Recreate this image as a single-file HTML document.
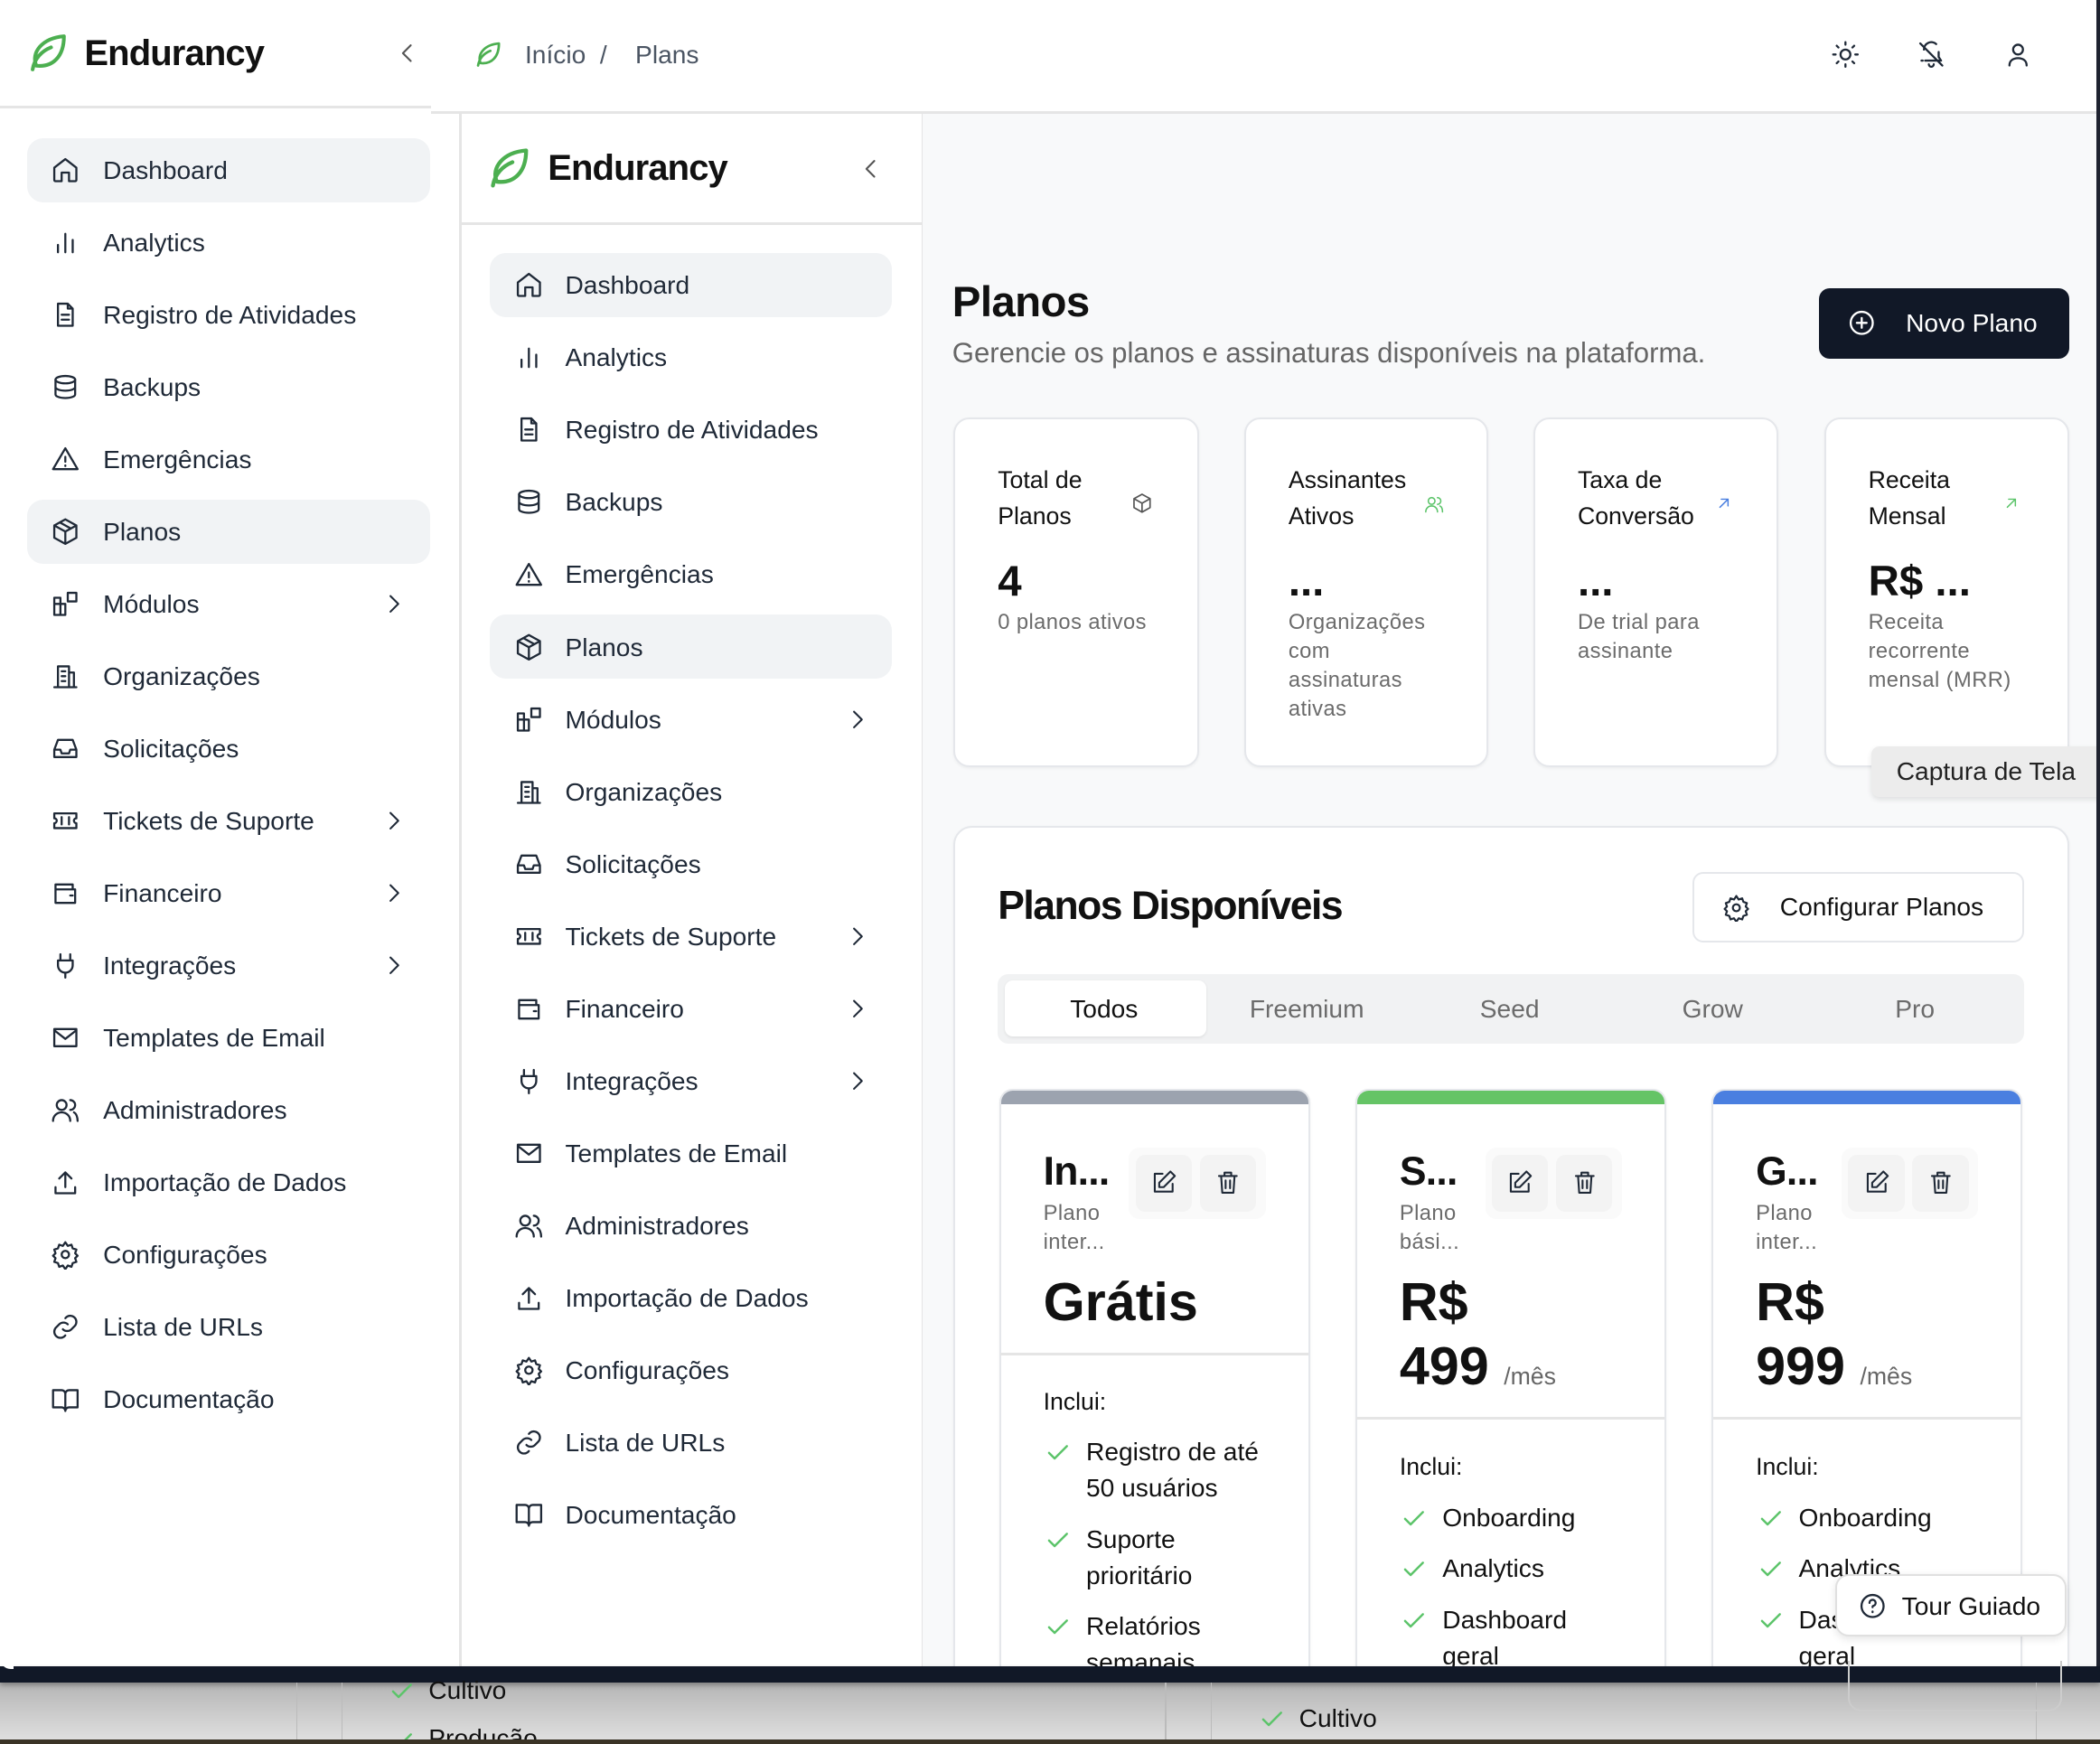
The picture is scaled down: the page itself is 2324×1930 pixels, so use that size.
<!DOCTYPE html>
<html><head><meta charset="utf-8">
<style>
*{margin:0;padding:0;box-sizing:border-box}
html,body{width:2324px;height:1930px;overflow:hidden;background:#fff}
#w{position:relative;width:1568px;height:1302px;zoom:1.48214;font-family:"Liberation Sans",sans-serif;color:#1f2937;overflow:hidden;background:#fff}
.a{position:absolute}
.t{position:absolute;white-space:nowrap;line-height:1}
svg.i{position:absolute;width:22px;height:22px;fill:none;stroke:#1f2937;stroke-width:1.7;stroke-linecap:round;stroke-linejoin:round}
.nv{font-size:19px;color:#1f2937}
.hl{position:absolute;background:#f1f3f5;border-radius:12px}
.card{position:absolute;background:#fff;border:1.5px solid #e5e7eb;border-radius:12px;box-shadow:0 1px 2px rgba(0,0,0,.05)}
.st{font-size:18px;color:#111;line-height:27px;position:absolute;white-space:nowrap}
.sd{font-size:16px;color:#6b6b6b;line-height:21.7px;position:absolute;white-space:nowrap;letter-spacing:.3px}
.sv{font-size:32px;font-weight:bold;color:#111;position:absolute;line-height:1}
.chk{position:absolute;width:20px;height:20px;fill:none;stroke:#5cc46a;stroke-width:2;stroke-linecap:round;stroke-linejoin:round}
.ft{position:absolute;font-size:19px;color:#111;line-height:27px;white-space:nowrap}
.logo{font-size:27px;font-weight:bold;color:#111;letter-spacing:-0.6px}
</style></head><body><div id="w">

<!-- outer sidebar -->
<svg class="i" style="left:20px;top:23px;width:33px;height:33px;stroke:#4caf50;stroke-width:2" viewBox="0 0 24 24"><path d="M3 21c1-6 5-10 10-12M5 19C2 12 8 4 20 3c0 11-6 17-15 16z"/></svg>
<div class="t logo" style="left:63px;top:26px">Endurancy</div>
<svg class="i" style="left:294px;top:30px;width:20px;height:20px;stroke:#555" viewBox="0 0 24 24"><path d="M15 5l-7 7 7 7"/></svg>
<div class="a" style="left:0;top:79px;width:322px;height:2px;background:#e5e5e5"></div>

<div class="hl" style="left:20px;top:103px;width:301px;height:48px"></div>
<div class="hl" style="left:20px;top:373px;width:301px;height:48px"></div>

<div class="a" style="left:38px;top:0">
<svg class="i" style="top:116px" viewBox="0 0 24 24"><path d="M3 10l9-7 9 7v10a1 1 0 0 1-1 1h-5v-7h-6v7H4a1 1 0 0 1-1-1z"/></svg>
<svg class="i" style="top:170px" viewBox="0 0 24 24"><path d="M6 20v-6M12 20V5M18 20v-10"/></svg>
<svg class="i" style="top:224px" viewBox="0 0 24 24"><path d="M14 3H6v18h12V7zM14 3v4h4M9 12h6M9 16h6"/></svg>
<svg class="i" style="top:278px" viewBox="0 0 24 24"><ellipse cx="12" cy="6" rx="8" ry="3"/><path d="M4 6v12c0 1.7 3.6 3 8 3s8-1.3 8-3V6M4 12c0 1.7 3.6 3 8 3s8-1.3 8-3"/></svg>
<svg class="i" style="top:332px" viewBox="0 0 24 24"><path d="M12 3L2 20h20zM12 10v4M12 17v.5"/></svg>
<svg class="i" style="top:386px" viewBox="0 0 24 24"><path d="M12 2l9 5v10l-9 5-9-5V7zM3 7l9 5 9-5M12 12v10M7.5 4.5l9 5"/></svg>
<svg class="i" style="top:440px" viewBox="0 0 24 24"><path d="M3 12h9v9H3zM3 12V7h5v5M8 21v-9M14 3h7v7h-7z"/></svg>
<svg class="i" style="top:494px" viewBox="0 0 24 24"><path d="M6 21V4h9v17M15 9h4v12M3 21h18M9 8h3M9 12h3M9 16h3"/></svg>
<svg class="i" style="top:548px" viewBox="0 0 24 24"><path d="M3 13l3-8h12l3 8v6H3zM3 13h5l1 3h6l1-3h5"/></svg>
<svg class="i" style="top:602px" viewBox="0 0 24 24"><path d="M3 6h18v4a2 2 0 0 0 0 4v4H3v-4a2 2 0 0 0 0-4zM9 9v6M15 9v6"/></svg>
<svg class="i" style="top:656px" viewBox="0 0 24 24"><path d="M4 5h14v4M4 5v15h16V9H4M16 14h2"/></svg>
<svg class="i" style="top:710px" viewBox="0 0 24 24"><path d="M8 3v5M16 3v5M6 8h12v4a6 6 0 0 1-12 0zM12 18v4"/></svg>
<svg class="i" style="top:764px" viewBox="0 0 24 24"><path d="M3 5h18v14H3zM3 6l9 7 9-7"/></svg>
<svg class="i" style="top:818px" viewBox="0 0 24 24"><circle cx="9" cy="8" r="4"/><path d="M2 21c0-4 3-7 7-7s7 3 7 7M16 4a4 4 0 0 1 0 8M19 14c2 1 3 4 3 7"/></svg>
<svg class="i" style="top:872px" viewBox="0 0 24 24"><path d="M12 16V4M7 9l5-5 5 5M4 16v5h16v-5"/></svg>
<svg class="i" style="top:926px" viewBox="0 0 24 24"><circle cx="12" cy="12" r="3"/><path d="M12 2l2 3 3-1 1 3 3 1-1 3 2 2-2 2 1 3-3 1-1 3-3-1-2 3-2-3-3 1-1-3-3-1 1-3-2-2 2-2-1-3 3-1 1-3 3 1z"/></svg>
<svg class="i" style="top:980px" viewBox="0 0 24 24"><path d="M10 14a5 5 0 0 0 7 0l3-3a5 5 0 0 0-7-7l-1 1M14 10a5 5 0 0 0-7 0l-3 3a5 5 0 0 0 7 7l1-1"/></svg>
<svg class="i" style="top:1034px" viewBox="0 0 24 24"><path d="M2 4h7a3 3 0 0 1 3 3v14a3 3 0 0 0-3-3H2zM22 4h-7a3 3 0 0 0-3 3v14a3 3 0 0 1 3-3h7z"/></svg>
</div>
<div class="a nv" style="left:77px;top:0">
<div class="t" style="top:118px">Dashboard</div><div class="t" style="top:172px">Analytics</div><div class="t" style="top:226px">Registro de Atividades</div><div class="t" style="top:280px">Backups</div><div class="t" style="top:334px">Emergências</div><div class="t" style="top:388px">Planos</div><div class="t" style="top:442px">Módulos</div><div class="t" style="top:496px">Organizações</div><div class="t" style="top:550px">Solicitações</div><div class="t" style="top:604px">Tickets de Suporte</div><div class="t" style="top:658px">Financeiro</div><div class="t" style="top:712px">Integrações</div><div class="t" style="top:766px">Templates de Email</div><div class="t" style="top:820px">Administradores</div><div class="t" style="top:874px">Importação de Dados</div><div class="t" style="top:928px">Configurações</div><div class="t" style="top:982px">Lista de URLs</div><div class="t" style="top:1036px">Documentação</div>
</div>
<div class="a" style="left:284px;top:0">
<svg class="i" style="top:440px;width:20px" viewBox="0 0 24 24"><path d="M9 5l7 7-7 7"/></svg>
<svg class="i" style="top:602px;width:20px" viewBox="0 0 24 24"><path d="M9 5l7 7-7 7"/></svg>
<svg class="i" style="top:656px;width:20px" viewBox="0 0 24 24"><path d="M9 5l7 7-7 7"/></svg>
<svg class="i" style="top:710px;width:20px" viewBox="0 0 24 24"><path d="M9 5l7 7-7 7"/></svg>
</div>

<!-- top bar -->
<div class="a" style="left:322px;top:83px;width:1246px;height:2px;background:#e5e5e5"></div>
<svg class="i" style="left:354px;top:30px;stroke:#4caf50;stroke-width:2" viewBox="0 0 24 24"><path d="M3 21c1-6 5-10 10-12M5 19C2 12 8 4 20 3c0 11-6 17-15 16z"/></svg>
<div class="t" style="left:392px;top:32px;font-size:19px;color:#4b5563">Início &nbsp;/ &nbsp;&nbsp;&nbsp;Plans</div>
<svg class="i" style="left:1367px;top:30px" viewBox="0 0 24 24"><circle cx="12" cy="12" r="4"/><path d="M12 2v2M12 20v2M2 12h2M20 12h2M4.9 4.9l1.4 1.4M17.7 17.7l1.4 1.4M4.9 19.1l1.4-1.4M17.7 6.3l1.4-1.4"/></svg>
<svg class="i" style="left:1431px;top:30px" viewBox="0 0 24 24"><path d="M6 8a6 6 0 0 1 10-4.5M18 10v4l2 3H7M4 17h1M10 20a2 2 0 0 0 4 0M3 3l18 18"/></svg>
<svg class="i" style="left:1496px;top:30px" viewBox="0 0 24 24"><circle cx="12" cy="8" r="4"/><path d="M5 21c0-4 3-6 7-6s7 2 7 6"/></svg>

<!-- inner sidebar -->
<div class="a" style="left:343px;top:85px;width:2px;height:1170px;background:#e5e5e5"></div>
<div class="a" style="left:688px;top:85px;width:1px;height:1170px;background:#e5e5e5"></div>
<svg class="i" style="left:364px;top:108px;width:35px;height:35px;stroke:#4caf50;stroke-width:2" viewBox="0 0 24 24"><path d="M3 21c1-6 5-10 10-12M5 19C2 12 8 4 20 3c0 11-6 17-15 16z"/></svg>
<div class="t logo" style="left:409px;top:112px">Endurancy</div>
<svg class="i" style="left:640px;top:116px;width:20px;height:20px;stroke:#555" viewBox="0 0 24 24"><path d="M15 5l-7 7 7 7"/></svg>
<div class="a" style="left:345px;top:166px;width:343px;height:2px;background:#e5e5e5"></div>
<div class="hl" style="left:366px;top:189px;width:300px;height:48px"></div>
<div class="hl" style="left:366px;top:459px;width:300px;height:48px"></div>
<div class="a" style="left:384px;top:86px">
<svg class="i" style="top:116px" viewBox="0 0 24 24"><path d="M3 10l9-7 9 7v10a1 1 0 0 1-1 1h-5v-7h-6v7H4a1 1 0 0 1-1-1z"/></svg>
<svg class="i" style="top:170px" viewBox="0 0 24 24"><path d="M6 20v-6M12 20V5M18 20v-10"/></svg>
<svg class="i" style="top:224px" viewBox="0 0 24 24"><path d="M14 3H6v18h12V7zM14 3v4h4M9 12h6M9 16h6"/></svg>
<svg class="i" style="top:278px" viewBox="0 0 24 24"><ellipse cx="12" cy="6" rx="8" ry="3"/><path d="M4 6v12c0 1.7 3.6 3 8 3s8-1.3 8-3V6M4 12c0 1.7 3.6 3 8 3s8-1.3 8-3"/></svg>
<svg class="i" style="top:332px" viewBox="0 0 24 24"><path d="M12 3L2 20h20zM12 10v4M12 17v.5"/></svg>
<svg class="i" style="top:386px" viewBox="0 0 24 24"><path d="M12 2l9 5v10l-9 5-9-5V7zM3 7l9 5 9-5M12 12v10M7.5 4.5l9 5"/></svg>
<svg class="i" style="top:440px" viewBox="0 0 24 24"><path d="M3 12h9v9H3zM3 12V7h5v5M8 21v-9M14 3h7v7h-7z"/></svg>
<svg class="i" style="top:494px" viewBox="0 0 24 24"><path d="M6 21V4h9v17M15 9h4v12M3 21h18M9 8h3M9 12h3M9 16h3"/></svg>
<svg class="i" style="top:548px" viewBox="0 0 24 24"><path d="M3 13l3-8h12l3 8v6H3zM3 13h5l1 3h6l1-3h5"/></svg>
<svg class="i" style="top:602px" viewBox="0 0 24 24"><path d="M3 6h18v4a2 2 0 0 0 0 4v4H3v-4a2 2 0 0 0 0-4zM9 9v6M15 9v6"/></svg>
<svg class="i" style="top:656px" viewBox="0 0 24 24"><path d="M4 5h14v4M4 5v15h16V9H4M16 14h2"/></svg>
<svg class="i" style="top:710px" viewBox="0 0 24 24"><path d="M8 3v5M16 3v5M6 8h12v4a6 6 0 0 1-12 0zM12 18v4"/></svg>
<svg class="i" style="top:764px" viewBox="0 0 24 24"><path d="M3 5h18v14H3zM3 6l9 7 9-7"/></svg>
<svg class="i" style="top:818px" viewBox="0 0 24 24"><circle cx="9" cy="8" r="4"/><path d="M2 21c0-4 3-7 7-7s7 3 7 7M16 4a4 4 0 0 1 0 8M19 14c2 1 3 4 3 7"/></svg>
<svg class="i" style="top:872px" viewBox="0 0 24 24"><path d="M12 16V4M7 9l5-5 5 5M4 16v5h16v-5"/></svg>
<svg class="i" style="top:926px" viewBox="0 0 24 24"><circle cx="12" cy="12" r="3"/><path d="M12 2l2 3 3-1 1 3 3 1-1 3 2 2-2 2 1 3-3 1-1 3-3-1-2 3-2-3-3 1-1-3-3-1 1-3-2-2 2-2-1-3 3-1 1-3 3 1z"/></svg>
<svg class="i" style="top:980px" viewBox="0 0 24 24"><path d="M10 14a5 5 0 0 0 7 0l3-3a5 5 0 0 0-7-7l-1 1M14 10a5 5 0 0 0-7 0l-3 3a5 5 0 0 0 7 7l1-1"/></svg>
<svg class="i" style="top:1034px" viewBox="0 0 24 24"><path d="M2 4h7a3 3 0 0 1 3 3v14a3 3 0 0 0-3-3H2zM22 4h-7a3 3 0 0 0-3 3v14a3 3 0 0 1 3-3h7z"/></svg>
</div>
<div class="a nv" style="left:422px;top:86px">
<div class="t" style="top:118px">Dashboard</div><div class="t" style="top:172px">Analytics</div><div class="t" style="top:226px">Registro de Atividades</div><div class="t" style="top:280px">Backups</div><div class="t" style="top:334px">Emergências</div><div class="t" style="top:388px">Planos</div><div class="t" style="top:442px">Módulos</div><div class="t" style="top:496px">Organizações</div><div class="t" style="top:550px">Solicitações</div><div class="t" style="top:604px">Tickets de Suporte</div><div class="t" style="top:658px">Financeiro</div><div class="t" style="top:712px">Integrações</div><div class="t" style="top:766px">Templates de Email</div><div class="t" style="top:820px">Administradores</div><div class="t" style="top:874px">Importação de Dados</div><div class="t" style="top:928px">Configurações</div><div class="t" style="top:982px">Lista de URLs</div><div class="t" style="top:1036px">Documentação</div>
</div>
<div class="a" style="left:630px;top:86px">
<svg class="i" style="top:440px;width:20px" viewBox="0 0 24 24"><path d="M9 5l7 7-7 7"/></svg>
<svg class="i" style="top:602px;width:20px" viewBox="0 0 24 24"><path d="M9 5l7 7-7 7"/></svg>
<svg class="i" style="top:656px;width:20px" viewBox="0 0 24 24"><path d="M9 5l7 7-7 7"/></svg>
<svg class="i" style="top:710px;width:20px" viewBox="0 0 24 24"><path d="M9 5l7 7-7 7"/></svg>
</div>

<!-- main -->
<div class="a" style="left:689px;top:85px;width:877px;height:1170px;background:#f8f9fa"></div>
<div class="t" style="left:711px;top:210px;font-size:32px;font-weight:bold;color:#111;letter-spacing:-0.4px">Planos</div>
<div class="t" style="left:711px;top:253px;font-size:21px;color:#666">Gerencie os planos e assinaturas disponíveis na plataforma.</div>
<div class="a" style="left:1358px;top:215px;width:187px;height:53px;background:#111827;border-radius:8px"></div>
<svg class="i" style="left:1379px;top:230px;stroke:#fff" viewBox="0 0 24 24"><circle cx="12" cy="12" r="9"/><path d="M12 8v8M8 12h8"/></svg>
<div class="t" style="left:1423px;top:232px;font-size:19px;color:#fff">Novo Plano</div>

<div class="card" style="left:712px;top:312px;width:183px;height:261px"></div>
<div class="card" style="left:929px;top:312px;width:182px;height:261px"></div>
<div class="card" style="left:1145px;top:312px;width:183px;height:261px"></div>
<div class="card" style="left:1362px;top:312px;width:183px;height:261px"></div>
<div class="st" style="left:745px;top:345px">Total de<br>Planos</div>
<svg class="i" style="left:845px;top:368px;width:16px;height:16px;stroke:#555" viewBox="0 0 24 24"><path d="M12 2l9 5v10l-9 5-9-5V7zM3 7l9 5 9-5M12 12v10"/></svg>
<div class="sv" style="left:745px;top:418px">4</div>
<div class="sd" style="left:745px;top:454px">0 planos ativos</div>
<div class="st" style="left:962px;top:345px">Assinantes<br>Ativos</div>
<svg class="i" style="left:1063px;top:369px;width:15px;height:15px;stroke:#5cc46a" viewBox="0 0 24 24"><circle cx="9" cy="8" r="4"/><path d="M2 21c0-4 3-7 7-7s7 3 7 7M16 4a4 4 0 0 1 0 8M19 14c2 1 3 4 3 7"/></svg>
<div class="sv" style="left:962px;top:418px">...</div>
<div class="sd" style="left:962px;top:454px">Organizações<br>com<br>assinaturas<br>ativas</div>
<div class="st" style="left:1178px;top:345px">Taxa de<br>Conversão</div>
<svg class="i" style="left:1281px;top:370px;width:12px;height:12px;stroke:#4a7fe0;stroke-width:2" viewBox="0 0 24 24"><path d="M6 18L18 6M8 6h10v10"/></svg>
<div class="sv" style="left:1178px;top:418px">...</div>
<div class="sd" style="left:1178px;top:454px">De trial para<br>assinante</div>
<div class="st" style="left:1395px;top:345px">Receita<br>Mensal</div>
<svg class="i" style="left:1496px;top:370px;width:12px;height:12px;stroke:#5cc46a;stroke-width:2" viewBox="0 0 24 24"><path d="M6 18L18 6M8 6h10v10"/></svg>
<div class="sv" style="left:1395px;top:418px">R$ ...</div>
<div class="sd" style="left:1395px;top:454px">Receita<br>recorrente<br>mensal (MRR)</div>
<div class="a" style="left:1397px;top:557px;width:175px;height:38px;background:#ececec;border-radius:6px 0 0 6px;box-shadow:0 2px 4px rgba(0,0,0,.1)"></div>
<div class="t" style="left:1416px;top:567px;font-size:19px;color:#222">Captura de Tela</div>

<div class="card" style="left:712px;top:617px;width:833px;height:700px;border-radius:14px"></div>
<div class="t" style="left:745px;top:662px;font-size:30px;font-weight:bold;color:#111;letter-spacing:-1px">Planos Disponíveis</div>
<div class="a" style="left:1264px;top:651px;width:247px;height:53px;background:#fff;border:1.5px solid #e5e7eb;border-radius:8px"></div>
<svg class="i" style="left:1286px;top:667px;width:21px;height:21px" viewBox="0 0 24 24"><circle cx="12" cy="12" r="3"/><path d="M12 2l2 3 3-1 1 3 3 1-1 3 2 2-2 2 1 3-3 1-1 3-3-1-2 3-2-3-3 1-1-3-3-1 1-3-2-2 2-2-1-3 3-1 1-3 3 1z"/></svg>
<div class="t" style="left:1329px;top:668px;font-size:19px;color:#111">Configurar Planos</div>
<div class="a" style="left:745px;top:727px;width:766px;height:52px;background:#f1f2f3;border-radius:8px"></div>
<div class="a" style="left:750px;top:732px;width:151px;height:42px;background:#fff;border-radius:6px;box-shadow:0 1px 2px rgba(0,0,0,.08)"></div>
<div class="t" style="left:799px;top:744px;font-size:19px;color:#111">Todos</div>
<div class="t" style="left:933px;top:744px;font-size:19px;color:#6b6b6b">Freemium</div>
<div class="t" style="left:1105px;top:744px;font-size:19px;color:#6b6b6b">Seed</div>
<div class="t" style="left:1256px;top:744px;font-size:19px;color:#6b6b6b">Grow</div>
<div class="t" style="left:1415px;top:744px;font-size:19px;color:#6b6b6b">Pro</div>

<!-- plan cards -->
<div class="card" style="left:746px;top:813px;width:232px;height:500px;overflow:hidden;border-radius:10px"><div style="height:10px;background:#9ca3af"></div></div>
<div class="card" style="left:1012px;top:813px;width:232px;height:500px;overflow:hidden;border-radius:10px"><div style="height:10px;background:#65c466"></div></div>
<div class="card" style="left:1278px;top:813px;width:232px;height:500px;overflow:hidden;border-radius:10px"><div style="height:10px;background:#4a7fe0"></div></div>
<div class="a" style="left:747px;top:1010px;width:230px;height:2px;background:#e5e5e5"></div>
<div class="a" style="left:1013px;top:1058px;width:230px;height:2px;background:#e5e5e5"></div>
<div class="a" style="left:1279px;top:1058px;width:230px;height:2px;background:#e5e5e5"></div>

<div class="t" style="left:779px;top:860px;font-size:30px;font-weight:bold;color:#111;letter-spacing:-0.5px">In...</div>
<div class="t" style="left:1045px;top:860px;font-size:30px;font-weight:bold;color:#111;letter-spacing:-0.5px">S...</div>
<div class="t" style="left:1311px;top:860px;font-size:30px;font-weight:bold;color:#111;letter-spacing:-0.5px">G...</div>
<div class="sd" style="left:779px;top:895px">Plano<br>inter...</div>
<div class="sd" style="left:1045px;top:895px">Plano<br>bási...</div>
<div class="sd" style="left:1311px;top:895px">Plano<br>inter...</div>
<div class="a" style="left:843px;top:857px;width:102px;height:53px;background:#fafafa;border-radius:8px"></div>
<div class="a" style="left:1109px;top:857px;width:102px;height:53px;background:#fafafa;border-radius:8px"></div>
<div class="a" style="left:1375px;top:857px;width:102px;height:53px;background:#fafafa;border-radius:8px"></div>
<div class="a" style="left:848px;top:862px;width:42px;height:43px;background:#f3f3f3;border-radius:7px"></div><div class="a" style="left:896px;top:862px;width:42px;height:43px;background:#f3f3f3;border-radius:7px"></div>
<div class="a" style="left:1114px;top:862px;width:42px;height:43px;background:#f3f3f3;border-radius:7px"></div><div class="a" style="left:1162px;top:862px;width:42px;height:43px;background:#f3f3f3;border-radius:7px"></div>
<div class="a" style="left:1380px;top:862px;width:42px;height:43px;background:#f3f3f3;border-radius:7px"></div><div class="a" style="left:1428px;top:862px;width:42px;height:43px;background:#f3f3f3;border-radius:7px"></div>
<svg class="i" style="left:859px;top:873px;width:20px;height:20px" viewBox="0 0 24 24"><path d="M11 4H4v16h16v-7M18 2l4 4-10 10H8v-4z"/></svg>
<svg class="i" style="left:907px;top:873px;width:20px;height:20px" viewBox="0 0 24 24"><path d="M4 6h16M9 6V3h6v3M6 6l1 15h10l1-15M10 10v7M14 10v7"/></svg>
<svg class="i" style="left:1125px;top:873px;width:20px;height:20px" viewBox="0 0 24 24"><path d="M11 4H4v16h16v-7M18 2l4 4-10 10H8v-4z"/></svg>
<svg class="i" style="left:1173px;top:873px;width:20px;height:20px" viewBox="0 0 24 24"><path d="M4 6h16M9 6V3h6v3M6 6l1 15h10l1-15M10 10v7M14 10v7"/></svg>
<svg class="i" style="left:1391px;top:873px;width:20px;height:20px" viewBox="0 0 24 24"><path d="M11 4H4v16h16v-7M18 2l4 4-10 10H8v-4z"/></svg>
<svg class="i" style="left:1439px;top:873px;width:20px;height:20px" viewBox="0 0 24 24"><path d="M4 6h16M9 6V3h6v3M6 6l1 15h10l1-15M10 10v7M14 10v7"/></svg>

<div class="t" style="left:779px;top:952px;font-size:40px;font-weight:bold;color:#111">Grátis</div>
<div class="t" style="left:1045px;top:952px;font-size:40px;font-weight:bold;color:#111">R$</div>
<div class="t" style="left:1045px;top:1000px;font-size:40px;font-weight:bold;color:#111">499 <span style="font-size:18px;font-weight:normal;color:#666">/mês</span></div>
<div class="t" style="left:1311px;top:952px;font-size:40px;font-weight:bold;color:#111">R$</div>
<div class="t" style="left:1311px;top:1000px;font-size:40px;font-weight:bold;color:#111">999 <span style="font-size:18px;font-weight:normal;color:#666">/mês</span></div>

<div class="t" style="left:779px;top:1038px;font-size:18px;color:#111">Inclui:</div>
<div class="t" style="left:1045px;top:1086px;font-size:18px;color:#111">Inclui:</div>
<div class="t" style="left:1311px;top:1086px;font-size:18px;color:#111">Inclui:</div>
<svg class="chk" style="left:780px;top:1075px" viewBox="0 0 24 24"><path d="M4 12l5 5L20 6"/></svg><div class="ft" style="left:811px;top:1071px">Registro de até<br>50 usuários</div>
<svg class="chk" style="left:780px;top:1140px" viewBox="0 0 24 24"><path d="M4 12l5 5L20 6"/></svg><div class="ft" style="left:811px;top:1136px">Suporte<br>prioritário</div>
<svg class="chk" style="left:780px;top:1205px" viewBox="0 0 24 24"><path d="M4 12l5 5L20 6"/></svg><div class="ft" style="left:811px;top:1201px">Relatórios<br>semanais</div>
<svg class="chk" style="left:1046px;top:1124px" viewBox="0 0 24 24"><path d="M4 12l5 5L20 6"/></svg><div class="ft" style="left:1077px;top:1120px">Onboarding</div>
<svg class="chk" style="left:1046px;top:1162px" viewBox="0 0 24 24"><path d="M4 12l5 5L20 6"/></svg><div class="ft" style="left:1077px;top:1158px">Analytics</div>
<svg class="chk" style="left:1046px;top:1200px" viewBox="0 0 24 24"><path d="M4 12l5 5L20 6"/></svg><div class="ft" style="left:1077px;top:1196px">Dashboard<br>geral</div>
<svg class="chk" style="left:1312px;top:1124px" viewBox="0 0 24 24"><path d="M4 12l5 5L20 6"/></svg><div class="ft" style="left:1343px;top:1120px">Onboarding</div>
<svg class="chk" style="left:1312px;top:1162px" viewBox="0 0 24 24"><path d="M4 12l5 5L20 6"/></svg><div class="ft" style="left:1343px;top:1158px">Analytics</div>
<svg class="chk" style="left:1312px;top:1200px" viewBox="0 0 24 24"><path d="M4 12l5 5L20 6"/></svg><div class="ft" style="left:1343px;top:1196px">Dashboard<br>geral</div>

<div class="a" style="left:1370px;top:1175px;width:173px;height:47px;background:#fff;border:1.5px solid #e0e0e0;border-radius:10px;box-shadow:0 2px 6px rgba(0,0,0,.1)"></div>
<svg class="i" style="left:1387px;top:1188px" viewBox="0 0 24 24"><circle cx="12" cy="12" r="9"/><path d="M9.5 9.5a2.5 2.5 0 1 1 3 2.4c-.5.2-.5.6-.5 1.1M12 16.5v.5"/></svg>
<div class="t" style="left:1420px;top:1190px;font-size:19px;color:#111">Tour Guiado</div>

<!-- right edge -->
<div class="a" style="left:1565px;top:0;width:3px;height:1255px;background:#1f2330"></div>

<!-- bottom -->
<div class="a" style="left:0;top:1245px;width:1568px;height:57px;background:linear-gradient(#a9a9a9,#e2e2e2)"></div>
<div class="a" style="left:0;top:1244px;width:1568px;height:12px;background:#111827;box-shadow:0 2px 4px rgba(0,0,0,.3)"></div>
<div class="a" style="left:0;top:1236px;width:10px;height:10px;background:#fff;border-bottom-left-radius:8px"></div>
<div class="a" style="left:221px;top:1256px;width:1px;height:46px;background:#bbb"></div>
<div class="a" style="left:255px;top:1256px;width:1px;height:46px;background:#bbb"></div>
<div class="a" style="left:870px;top:1256px;width:1px;height:46px;background:#bbb"></div>
<div class="a" style="left:904px;top:1256px;width:1px;height:46px;background:#bbb"></div>
<div class="a" style="left:1520px;top:1256px;width:1px;height:46px;background:#bbb"></div>
<div class="a" style="left:1380px;top:1240px;width:160px;height:38px;border:1.5px solid #ccc;border-top:none;border-radius:0 0 10px 10px"></div>
<svg class="chk" style="left:290px;top:1253px" viewBox="0 0 24 24"><path d="M4 12l5 5L20 6"/></svg><div class="t" style="left:320px;top:1253px;font-size:19px;color:#111">Cultivo</div>
<svg class="chk" style="left:290px;top:1290px" viewBox="0 0 24 24"><path d="M4 12l5 5L20 6"/></svg><div class="t" style="left:320px;top:1289px;font-size:19px;color:#111">Produção</div>
<svg class="chk" style="left:940px;top:1274px" viewBox="0 0 24 24"><path d="M4 12l5 5L20 6"/></svg><div class="t" style="left:970px;top:1274px;font-size:19px;color:#111">Cultivo</div>
<div class="a" style="left:0;top:1299px;width:1568px;height:3px;background:#3a3326"></div>
</div></body></html>
